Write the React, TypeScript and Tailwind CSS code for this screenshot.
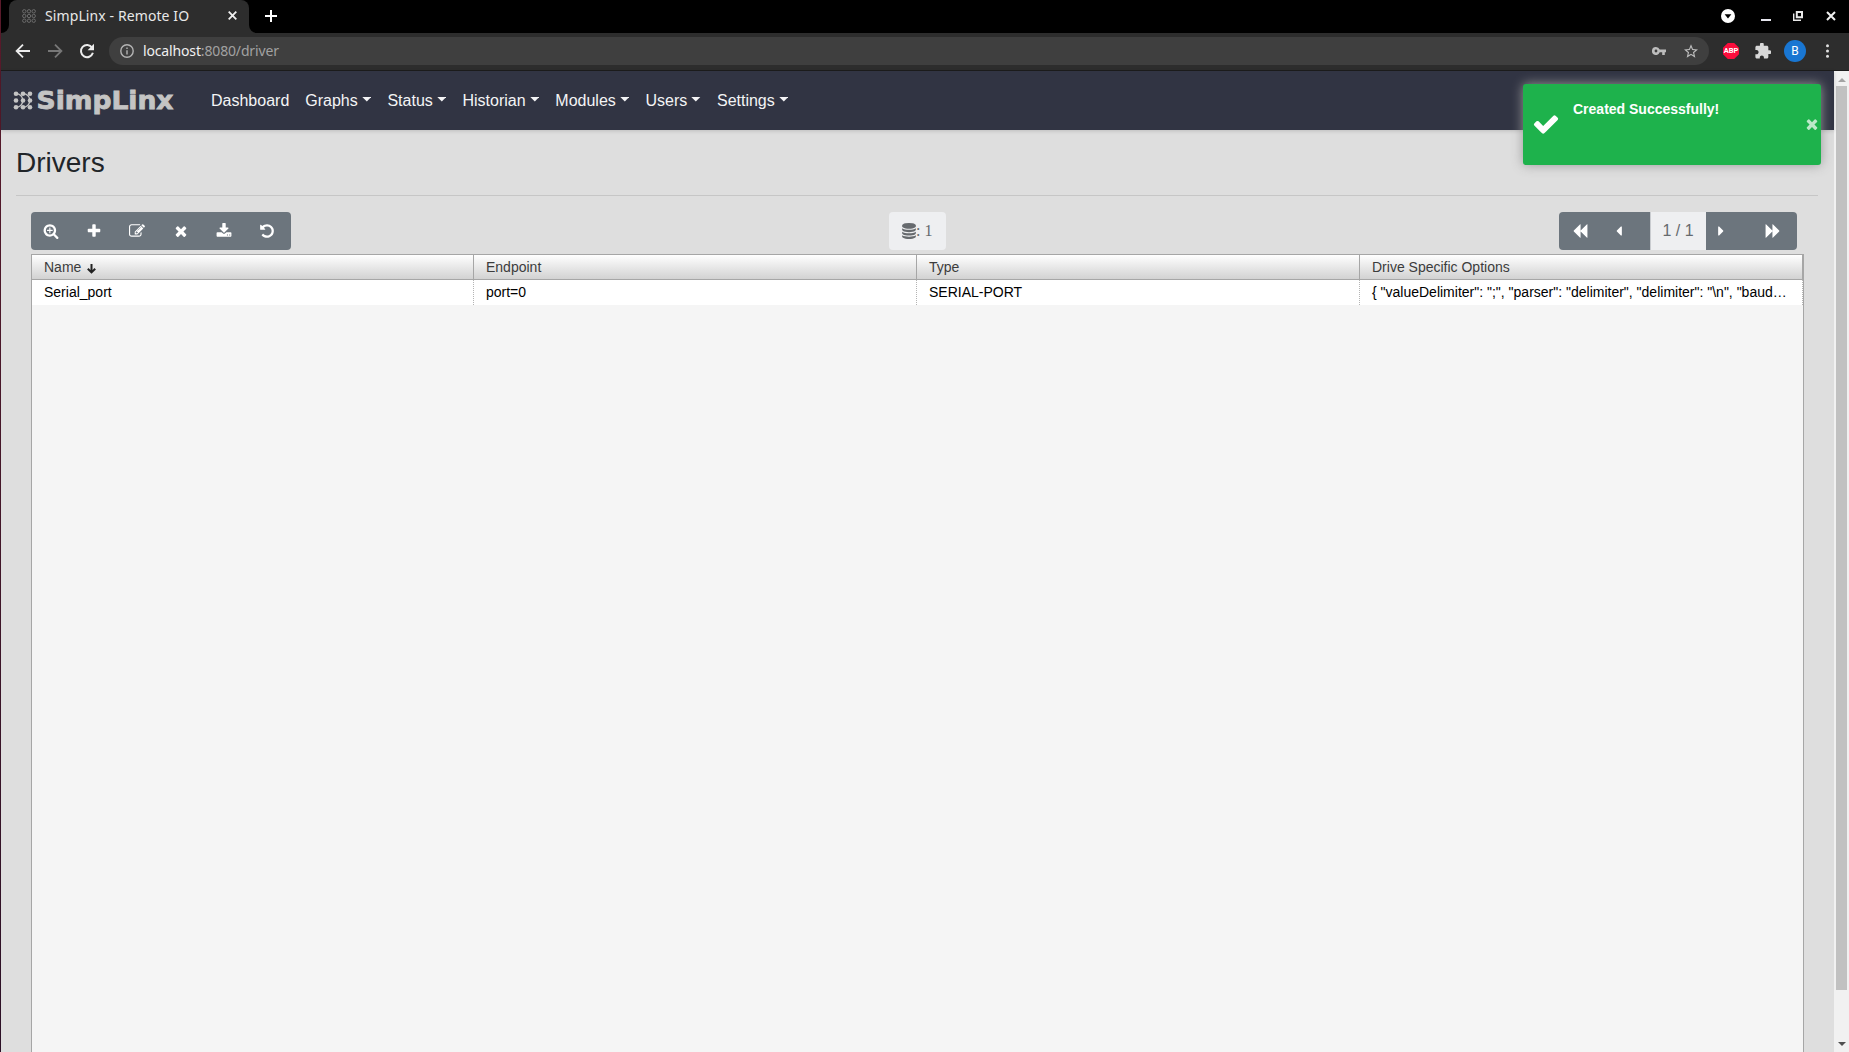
import React from "react";

const paths = {
  searchPlus:
    "M1088 800v64q0 13-9.5 22.5t-22.5 9.5h-224v224q0 13-9.5 22.5t-22.5 9.5h-64q-13 0-22.5-9.5t-9.5-22.5v-224h-224q-13 0-22.5-9.5t-9.5-22.5v-64q0-13 9.5-22.5t22.5-9.5h224v-224q0-13 9.5-22.5t22.5-9.5h64q13 0 22.5 9.5t9.5 22.5v224h224q13 0 22.5 9.5t9.5 22.5zm128 32q0-185-131.5-316.5t-316.5-131.5-316.5 131.5-131.5 316.5 131.5 316.5 316.5 131.5 316.5-131.5 131.5-316.5zm512 832q0 53-37.5 90.5t-90.5 37.5q-54 0-90-38l-343-342q-179 124-399 124-143 0-273.5-55.5t-225-150-150-225-55.5-273.5 55.5-273.5 150-225 225-150 273.5-55.5 273.5 55.5 225 150 150 225 55.5 273.5q0 220-124 399l343 343q37 37 37 90z",
  plus: "M1600 736v192q0 40-28 68t-68 28h-416v416q0 40-28 68t-68 28h-192q-40 0-68-28t-28-68v-416h-416q-40 0-68-28t-28-68v-192q0-40 28-68t68-28h416v-416q0-40 28-68t68-28h192q40 0 68 28t28 68v416h416q40 0 68 28t28 68z",
  edit: "M888 1184l116-116-152-152-116 116v56h96v96h56zm440-720q-16-16-33 1l-350 350q-17 17-1 33t33-1l350-350q17-17 1-33zm80 594v190q0 119-84.5 203.5t-203.5 84.5h-832q-119 0-203.5-84.5t-84.5-203.5v-832q0-119 84.5-203.5t203.5-84.5h832q63 0 117 25 15 7 18 23 3 17-9 29l-49 49q-14 14-32 8-23-6-45-6h-832q-66 0-113 47t-47 113v832q0 66 47 113t113 47h832q66 0 113-47t47-113v-126q0-13 9-22l64-64q15-15 35-7t20 29zm-96-738l288 288-672 672h-288v-288zm444 132l-92 92-288-288 92-92q28-28 68-28t68 28l152 152q28 28 28 68t-28 68z",
  times:
    "M1490 1322q0 40-28 68l-136 136q-28 28-68 28t-68-28l-294-294-294 294q-28 28-68 28t-68-28l-136-136q-28-28-28-68t28-68l294-294-294-294q-28-28-28-68t28-68l136-136q28-28 68-28t68 28l294 294 294-294q28-28 68-28t68 28l136 136q28 28 28 68t-28 68l-294 294 294 294q28 28 28 68z",
  download:
    "M1344 1344q0-26-19-45t-45-19-45 19-19 45 19 45 45 19 45-19 19-45zm256 0q0-26-19-45t-45-19-45 19-19 45 19 45 45 19 45-19 19-45zm128-224v320q0 40-28 68t-68 28h-1472q-40 0-68-28t-28-68v-320q0-40 28-68t68-28h465l135 136q58 56 136 56t136-56l136-136h464q40 0 68 28t28 68zm-325-569q17 41-14 70l-448 448q-18 19-45 19t-45-19l-448-448q-31-29-14-70 17-39 59-39h256v-448q0-26 19-45t45-19h256q26 0 45 19t19 45v448h256q42 0 59 39z",
  undo: "M1664 896q0 156-61 298t-164 245-245 164-298 61q-172 0-327-72.5t-264-204.5q-7-10-6.5-22.5t8.5-20.5l137-138q10-9 25-9 16 2 23 12 73 95 179 147t225 52q104 0 198.5-40.5t163.5-109.5 109.5-163.5 40.5-198.5-40.5-198.5-109.5-163.5-163.5-109.5-198.5-40.5q-98 0-188 35.5t-160 101.5l137 138q31 30 14 69-17 40-59 40h-448q-26 0-45-19t-19-45v-448q0-42 40-59 39-17 69 14l130 129q107-101 244.5-156.5t284.5-55.5q156 0 298 61t245 164 164 245 61 298z",
  database:
    "M896 768q237 0 443-43t325-127v170q0 69-103 128t-280 93.5-385 34.5-385-34.5-280-93.5-103-128v-170q119 84 325 127t443 43zm0 768q237 0 443-43t325-127v170q0 69-103 128t-280 93.5-385 34.5-385-34.5-280-93.5-103-128v-170q119 84 325 127t443 43zm0-384q237 0 443-43t325-127v170q0 69-103 128t-280 93.5-385 34.5-385-34.5-280-93.5-103-128v-170q119 84 325 127t443 43zm0-1152q208 0 385 34.5t280 93.5 103 128v128q0 69-103 128t-280 93.5-385 34.5-385-34.5-280-93.5-103-128v-128q0-69 103-128t280-93.5 385-34.5z",
  check:
    "M1671 566q0 40-28 68l-724 724-136 136q-28 28-68 28t-68-28l-136-136-362-362q-28-28-28-68t28-68l136-136q28-28 68-28t68 28l294 295 656-657q28-28 68-28t68 28l136 136q28 28 28 68z",
  backward:
    "M1683 141q19-19 32-13t13 32v1472q0 26-13 32t-32-13l-710-710q-9-9-13-19v710q0 26-13 32t-32-13l-710-710q-19-19-19-45t19-45l710-710q19-19 32-13t13 32v710q4-10 13-19z",
  caretLeft: "M1216 448v896q0 26-19 45t-45 19-45-19l-448-448q-19-19-19-45t19-45l448-448q19-19 45-19t45 19 19 45z",
};

function Glyph({ name, className = "size-4" }: { name: keyof typeof paths; className?: string }) {
  return (
    <svg viewBox="0 0 1792 1792" fill="currentColor" className={className}>
      <path d={paths[name]} />
    </svg>
  );
}

function TabStrip() {
  return (
    <div className="flex h-[33px] items-stretch bg-black">
      <div className="flex w-2 items-end bg-[#2d2d2d]">
        <div className="h-[33px] w-2 rounded-br-lg bg-black" />
      </div>
      <div className="flex w-[240px] items-center rounded-t-lg bg-[#2d2d2d] pb-[2px] pl-[13px] pr-[11px]">
        <svg width="14" height="14" viewBox="0 0 14 14" fill="none" stroke="#6b6b6b" strokeWidth="1">
          {[2.3, 7, 11.7].map((y) =>
            [2.3, 7, 11.7].map((x) => <circle key={`${x}-${y}`} cx={x} cy={y} r="1.7" />),
          )}
        </svg>
        <span className="ml-[9px] grow whitespace-nowrap font-['Noto_Sans',sans-serif] text-[14px] leading-[18px] tracking-[0.1px] text-[#e8e8e8]">
          SimpLinx - Remote IO
        </span>
        <svg width="11" height="11" viewBox="0 0 11 11" stroke="#f0f0f0" strokeWidth="1.8">
          <path d="M1.7 1.7l7.6 7.6M9.3 1.7L1.7 9.3" />
        </svg>
      </div>
      <div className="flex w-2 bg-[#2d2d2d]">
        <div className="h-[33px] w-2 rounded-bl-lg bg-black" />
      </div>
      <svg className="ml-[7px] mt-[9px]" width="14" height="14" viewBox="0 0 14 14" stroke="#fff" strokeWidth="2">
        <path d="M7 1v12M1 7h12" />
      </svg>
      <div className="ml-auto flex items-center pb-px">
        <svg className="mr-[26px]" width="14" height="14" viewBox="0 0 14 14">
          <circle cx="7" cy="7" r="7" fill="#fff" />
          <path d="M3.6 5.2h6.8L7 9.4z" fill="#000" />
        </svg>
        <svg className="mr-[22px]" width="10" height="14" viewBox="0 0 10 14">
          <path d="M0 10h10v2H0z" fill="#e6e6ee" />
        </svg>
        <svg className="mr-[23px]" width="10" height="10" viewBox="0 0 10 10" fill="none" stroke="#e8e8e8">
          <path d="M3.8 1h5.2v5.2H3.8z" strokeWidth="2" />
          <path d="M.7 2.5v6.8H8" strokeWidth="1.4" />
        </svg>
        <svg className="mr-[13px]" width="10" height="10" viewBox="0 0 10 10" stroke="#f0f0f0" strokeWidth="2">
          <path d="M1 1l8 8M9 1L1 9" />
        </svg>
      </div>
    </div>
  );
}

function AddressBar() {
  return (
    <div className="flex h-[38px] items-center border-b border-[#1c1c1c] bg-[#2d2d2d] pb-px pl-[14px] pr-5">
      <svg width="16" height="16" viewBox="0 0 16 16" fill="none" stroke="#ececec" strokeWidth="1.8">
        <path d="M15 8H2M8 1.6L1.6 8 8 14.4" />
      </svg>
      <svg className="ml-4" width="16" height="16" viewBox="0 0 16 16" fill="none" stroke="#777" strokeWidth="1.8">
        <path d="M1 8h13M8 1.6L14.4 8 8 14.4" />
      </svg>
      <svg className="ml-4" width="16" height="16" viewBox="0 0 16 16">
        <path d="M13.1 4.6A6.1 6.1 0 1 0 13.9 9.8" fill="none" stroke="#ececec" strokeWidth="2" />
        <path d="M15 .8v6.4H8.6z" fill="#ececec" />
      </svg>
      <div className="ml-[14px] flex h-7 grow items-center rounded-full bg-[#3f3f3f] pl-[11px] pr-[11px]">
        <svg width="14" height="14" viewBox="0 0 14 14" fill="none" stroke="#b4b4b4" strokeWidth="1.4">
          <circle cx="7" cy="7" r="6.2" />
          <path d="M7 6.2v4.2M7 3.4v1.6" />
        </svg>
        <span className="-mt-px ml-[9px] whitespace-nowrap font-['Noto_Sans',sans-serif] text-[14px] leading-[18px] tracking-[-0.15px] text-[#a2a2a2]">
          <span className="text-[#f0f0f0]">localhost</span>:8080/driver
        </span>
        <svg className="ml-auto" width="14" height="8" viewBox="0 0 14 8">
          <path
            fillRule="evenodd"
            d="M4 0a4 4 0 0 1 3.7 2.6H14v2.7h-1.2V8h-2.6V5.3H7.7A4 4 0 1 1 4 0zm0 2.6a1.4 1.4 0 1 0 0 2.8 1.4 1.4 0 0 0 0-2.8z"
            fill="#bdbdbd"
          />
        </svg>
        <svg className="ml-[18px]" width="14" height="14" viewBox="2 2 20 19" fill="#bdbdbd">
          <path d="M22 9.24l-7.19-.62L12 2 9.19 8.63 2 9.24l5.46 4.73L5.82 21 12 17.27 18.18 21l-1.63-7.03L22 9.24zM12 15.4l-3.76 2.27 1-4.28-3.32-2.88 4.38-.38L12 6.1l1.71 4.04 4.38.38-3.32 2.88 1 4.28L12 15.4z" />
        </svg>
      </div>
      <div className="ml-[14px] flex size-4 items-center justify-center bg-[#fb0d3c] [clip-path:polygon(30%_0,70%_0,100%_30%,100%_70%,70%_100%,30%_100%,0_70%,0_30%)]">
        <span className="font-['Roboto',sans-serif] text-[7.5px] font-bold leading-none text-white">ABP</span>
      </div>
      <svg className="ml-4" width="16" height="16" viewBox="1.5 1.5 21 21" fill="#d8d8d8">
        <path d="M20.5 11H19V7c0-1.1-.9-2-2-2h-4V3.5a2.5 2.5 0 0 0-5 0V5H4c-1.1 0-1.99.9-1.99 2v3.8H3.5c1.49 0 2.7 1.21 2.7 2.7s-1.21 2.7-2.7 2.7H2V20c0 1.1.9 2 2 2h3.8v-1.5c0-1.49 1.21-2.7 2.7-2.7s2.7 1.21 2.7 2.7V22H17c1.1 0 2-.9 2-2v-4h1.5a2.5 2.5 0 0 0 0-5z" />
      </svg>
      <div className="ml-[13px] flex size-[22px] items-center justify-center rounded-full bg-[#1976d2] font-['Roboto',sans-serif] text-[12px] text-white">
        B
      </div>
      <svg className="ml-5" width="3" height="14" viewBox="0 0 3 14" fill="#e0e0e0">
        <circle cx="1.5" cy="1.7" r="1.5" />
        <circle cx="1.5" cy="7" r="1.5" />
        <circle cx="1.5" cy="12.3" r="1.5" />
      </svg>
    </div>
  );
}

function Logo() {
  return (
    <svg width="162" height="32" viewBox="0 0 162 32" fill="#c4c4c4" className="shrink-0">
      <g>
        {[8.7, 15.5, 22.3].map((y) =>
          [3, 10, 17].map((x) => <circle key={`${x}-${y}`} cx={x} cy={y} r="2.3" />),
        )}
      </g>
      <path
        d="M3 8.7q6 .3 7 6.8-1 6.500-7 6.800M10 8.700q6 .3 7 6.800-1 6.500-7 6.800"
        fill="none"
        stroke="#c4c4c4"
        strokeWidth="1.3"
      />
      <text
        x="23.500"
        y="24"
        textLength="137"
        lengthAdjust="spacingAndGlyphs"
        stroke="#c4c4c4"
        strokeWidth=".8"
        className="font-['DejaVu_Sans',sans-serif] text-[24px] font-bold"
      >
        SimpLinx
      </text>
    </svg>
  );
}

const menus = ["Graphs", "Status", "Historian", "Modules", "Users", "Settings"];

function Navbar() {
  return (
    <nav className="flex h-[59px] items-center bg-[#313443] pl-3 shadow-[0_1px_4px_rgba(0,0,0,0.15)]">
      <Logo />
      <ul className="ml-[28px] flex text-[16px] leading-6 text-[#f4f4f6]">
        <li className="px-2">Dashboard</li>
        {menus.map((m) => (
          <li key={m} className="flex items-center px-2">
            {m}
            <svg className="-mt-[2px] ml-[4.1px] h-[5px] w-[9.6px]" viewBox="0 0 9.6 5" fill="currentColor">
              <path d="M.3 0h9L4.800 4.600z" />
            </svg>
          </li>
        ))}
      </ul>
    </nav>
  );
}

const tools: (keyof typeof paths)[] = ["searchPlus", "plus", "edit", "times", "download", "undo"];

function Toolbar() {
  return (
    <div className="ml-[15px] mr-[21px] mt-4 flex h-[38px] items-stretch">
      <div className="flex w-[260px] rounded bg-[#6c757d] text-white">
        {tools.map((t) => (
          <button key={t} className="flex w-[43.2px] items-center pb-px pl-3">
            <Glyph name={t} />
          </button>
        ))}
      </div>
      <div className="ml-[598px] flex w-[57px] items-center rounded bg-[#eeeff1] pb-px pl-[12px] text-[#666a6e]">
        <Glyph name="database" />
        <span className="-ml-px font-['Liberation_Serif',serif] text-[16px] leading-6">: 1</span>
      </div>
      <div className="ml-auto flex w-[238px] overflow-hidden rounded bg-[#6c757d] text-white">
        <button className="flex w-[45px] items-center pb-px pl-[13px]">
          <Glyph name="backward" />
        </button>
        <button className="flex w-[46px] items-center pb-px pl-[7px]">
          <Glyph name="caretLeft" />
        </button>
        <span className="flex w-14 items-center justify-center border-l border-[#c9ccd0] bg-[#eeeff1] pr-px text-[16px] text-[#666a6e]">
          1 / 1
        </span>
        <button className="flex w-[46px] items-center pb-px pl-[7px]">
          <Glyph name="caretLeft" className="size-4 rotate-180" />
        </button>
        <button className="flex items-center pb-px pl-[12.5px]">
          <Glyph name="backward" className="size-4 rotate-180" />
        </button>
      </div>
    </div>
  );
}

const headers = ["Name", "Endpoint", "Type", "Drive Specific Options"];
const row = [
  "Serial_port",
  "port=0",
  "SERIAL-PORT",
  '{ "valueDelimiter": ";", "parser": "delimiter", "delimiter": "\\n", "baud…',
];

function DataGrid() {
  return (
    <div className="ml-[15px] mr-[14px] mt-1 flex grow flex-col border border-b-0 border-[#a6a6a6] bg-[#f5f5f5] text-[14px]">
      <div className="grid h-[25px] grid-cols-[442px_443px_443px_443px] border-b border-[#a6a6a6] bg-linear-to-b from-white to-[#d2d2d2] text-[#3c3c3c]">
        {headers.map((h, i) => (
          <div key={h} className="flex items-center border-r border-[#a6a6a6] pl-3">
            {h}
            {i === 0 && (
              <svg className="ml-[6px] mt-[3px]" width="9" height="10" viewBox="0 0 9 10" fill="none" stroke="#222" strokeWidth="2">
                <path d="M4.5 0v8M.8 4.7l3.7 3.7 3.7-3.7" />
              </svg>
            )}
          </div>
        ))}
      </div>
      <div className="grid h-[25px] grid-cols-[442px_443px_443px_443px] bg-white text-black">
        {row.map((c) => (
          <div key={c} className="whitespace-nowrap border-r border-dotted border-[#b4b4b4] pl-3 leading-[25px]">
            {c}
          </div>
        ))}
      </div>
    </div>
  );
}

function Toast() {
  return (
    <div className="absolute right-[13px] top-[13px] flex h-[81px] w-[298px] rounded-[3px] bg-[#1eb24c] text-white shadow-[0_0_12px_#999]">
      <Glyph name="check" className="ml-[9px] mt-[26px] size-[28px]" />
      <span className="ml-[13px] mt-[16px] text-[14px] font-bold leading-[18px]">Created Successfully!</span>
      <Glyph name="times" className="ml-auto mr-[1px] mt-[32px] size-4 opacity-70" />
    </div>
  );
}

function Scrollbar() {
  return (
    <div className="flex w-[15px] shrink-0 flex-col items-center bg-[#f1f1f1]">
      <div className="flex h-[15px] items-center justify-center">
        <div className="mt-[3px] border-x-4 border-b-4 border-x-transparent border-b-[#a3a3a3]" />
      </div>
      <div className="h-[904px] w-[11px] bg-[#c1c1c1]" />
      <div className="mb-[6px] mt-auto border-x-4 border-t-4 border-x-transparent border-t-[#505050]" />
    </div>
  );
}

export default function App() {
  return (
    <div className="flex h-[1052px] w-[1849px] overflow-hidden font-['Liberation_Sans',Arial,sans-serif]">
      <div className="w-px shrink-0 bg-linear-to-b from-[#5a1a2a] to-[#2c1026]" />
      <div className="flex min-w-0 grow flex-col">
        <TabStrip />
        <AddressBar />
        <div className="flex min-h-0 grow">
          <div className="relative flex min-w-0 grow flex-col bg-[#dedede]">
            <Navbar />
            <main className="flex grow flex-col px-4">
              <h1 className="-ml-px mt-[16px] text-[28px] leading-[34px] text-[#212529]">Drivers</h1>
              <hr className="-ml-px mt-[15px] border-t border-[#c6c6c6]" />
              <div className="-ml-px flex grow flex-col">
                <Toolbar />
                <DataGrid />
              </div>
            </main>
            <Toast />
          </div>
          <Scrollbar />
        </div>
      </div>
    </div>
  );
}
